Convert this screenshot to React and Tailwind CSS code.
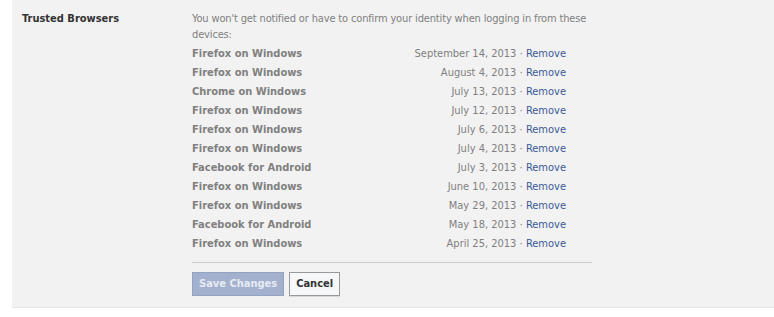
import React from 'react';

const devices = [
  { name: 'Firefox on Windows', date: 'September 14, 2013' },
  { name: 'Firefox on Windows', date: 'August 4, 2013' },
  { name: 'Chrome on Windows', date: 'July 13, 2013' },
  { name: 'Firefox on Windows', date: 'July 12, 2013' },
  { name: 'Firefox on Windows', date: 'July 6, 2013' },
  { name: 'Firefox on Windows', date: 'July 4, 2013' },
  { name: 'Facebook for Android', date: 'July 3, 2013' },
  { name: 'Firefox on Windows', date: 'June 10, 2013' },
  { name: 'Firefox on Windows', date: 'May 29, 2013' },
  { name: 'Facebook for Android', date: 'May 18, 2013' },
  { name: 'Firefox on Windows', date: 'April 25, 2013' },
];

export default function App() {
  return (
    <div className="w-[774px] h-[317px] bg-white font-['DejaVu_Sans_Condensed','DejaVu_Sans',sans-serif] text-[11px] [font-stretch:condensed]">
      <div className="ml-[12px] bg-[#f2f2f2] border-b border-[#e5e5e5] flex pt-[10px] pb-[11px]">
        {/* label column */}
        <div className="w-[180px] pl-[10px] pt-[1px] font-bold text-[#333] leading-[15px]">
          Trusted Browsers
        </div>

        {/* settings column */}
        <div className="w-[400px]">
          <p className="text-[#808080] leading-[16px] pt-[1px] tracking-[-0.15px] w-[410px]">
            You won't get notified or have to confirm your identity when logging in from these devices:
          </p>
          <div className="w-[374px] mt-[2px]">
            {devices.map((d, i) => (
              <div key={i} className="flex justify-between h-[19px] items-center">
                <span className="font-bold text-[#808080]">{d.name}</span>
                <span className="text-[#808080]">
                  {d.date} <span className="text-[#808080]">·</span>{' '}
                  <a href="#" className="text-[#3b5998]">Remove</a>
                </span>
              </div>
            ))}
          </div>

          <div className="border-t border-[#ccc] mt-[8px] pt-[9px] flex gap-[5px]">
            <button className="h-[24px] px-[6px] bg-[#a3b1cf] border border-[#94a2c2] text-[#e7ebf3] font-bold">
              Save Changes
            </button>
            <button className="h-[24px] px-[6px] bg-[#f6f7f8] border border-[#999] text-[#333] font-bold shadow-[0_1px_0_rgba(0,0,0,0.1)]">
              Cancel
            </button>
          </div>
        </div>
      </div>
    </div>
  );
}
